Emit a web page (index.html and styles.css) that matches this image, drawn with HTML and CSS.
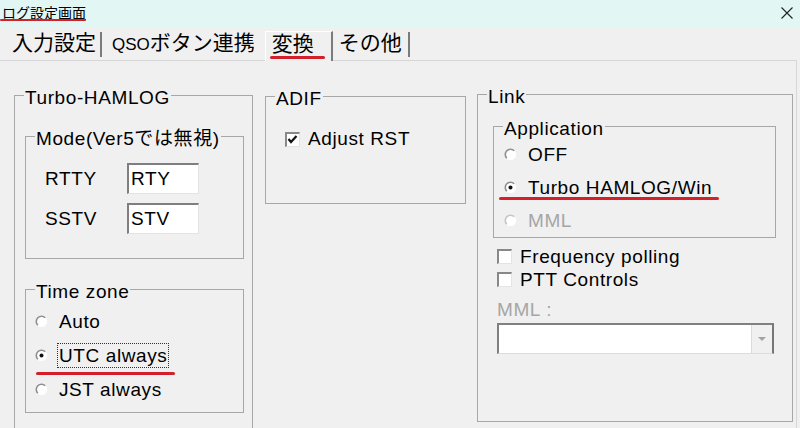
FILE: index.html
```html
<!DOCTYPE html>
<html lang="ja">
    <head>
        <meta charset="utf-8">
        <link rel="stylesheet" href="styles.css">
    </head>
    <body>
    <div class="titlebar">
        <span class="title">ログ設定画面</span>
        <svg class="close" width="12" height="12" viewBox="0 0 12 12"><path d="M0.5 0.5L11.5 11.5M11.5 0.5L0.5 11.5" stroke="#222" stroke-width="1.1" fill="none"/></svg>
    </div>
    <div class="tabs">
        <div class="tab tab-first">入力設定</div>
        <div class="tab tab-qso"><span class="latin">QSO</span>ボタン連携</div>
        <div class="tab tab-active"><span class="tab-mark">変換</span></div>
        <div class="tab tab-last">その他</div>
    </div>
    <div class="page">
        <!-- Turbo-HAMLOG -->
        <fieldset class="group group-turbo">
            <legend>Turbo-HAMLOG</legend>
            <fieldset class="group group-mode">
                <legend>Mode(Ver5では無視)</legend>
                <div class="mode-body">
                    <div class="field-row"><span class="field-label">RTTY</span><input class="text-box" type="text" value="RTY"></div>
                    <div class="field-row"><span class="field-label">SSTV</span><input class="text-box" type="text" value="STV"></div>
                </div>
            </fieldset>
            <fieldset class="group group-tz">
                <legend>Time zone</legend>
                <div class="tz-body">
                    <div class="option">
                        <svg class="radio" width="13" height="13" viewBox="0 0 13 13"><circle cx="6.5" cy="6.5" r="5.6" fill="#fff"/><path d="M2.8 10.2A5.2 5.2 0 0 1 10.2 2.8" stroke="#8e8e8e" stroke-width="1.6" fill="none"/></svg>
                        <span class="option-text">Auto</span>
                    </div>
                    <div class="option mark-utc">
                        <svg class="radio" width="13" height="13" viewBox="0 0 13 13"><circle cx="6.5" cy="6.5" r="5.6" fill="#fff"/><path d="M2.8 10.2A5.2 5.2 0 0 1 10.2 2.8" stroke="#8e8e8e" stroke-width="1.6" fill="none"/><circle cx="6.5" cy="6.5" r="2" fill="#111"/></svg>
                        <span class="option-text focus">UTC always</span>
                    </div>
                    <div class="option">
                        <svg class="radio" width="13" height="13" viewBox="0 0 13 13"><circle cx="6.5" cy="6.5" r="5.6" fill="#fff"/><path d="M2.8 10.2A5.2 5.2 0 0 1 10.2 2.8" stroke="#8e8e8e" stroke-width="1.6" fill="none"/></svg>
                        <span class="option-text">JST always</span>
                    </div>
                </div>
            </fieldset>
        </fieldset>

        <!-- ADIF -->
        <fieldset class="group group-adif">
            <legend>ADIF</legend>
            <div class="adif-body">
                <div class="check">
                    <span class="box"><svg width="11" height="11" viewBox="0 0 11 11"><path d="M1.5 5L4 8L9.5 2" stroke="#111" stroke-width="2.2" fill="none"/></svg></span>
                    <span>Adjust RST</span>
                </div>
            </div>
        </fieldset>

        <!-- Link -->
        <fieldset class="group group-link">
            <legend>Link</legend>
            <fieldset class="group group-app">
                <legend>Application</legend>
                <div class="app-body">
                    <div class="option option-app">
                        <svg class="radio" width="13" height="13" viewBox="0 0 13 13"><circle cx="6.5" cy="6.5" r="5.6" fill="#fff"/><path d="M2.8 10.2A5.2 5.2 0 0 1 10.2 2.8" stroke="#8e8e8e" stroke-width="1.6" fill="none"/></svg>
                        <span class="option-text">OFF</span>
                    </div>
                    <div class="option option-app mark-turbo">
                        <svg class="radio" width="13" height="13" viewBox="0 0 13 13"><circle cx="6.5" cy="6.5" r="5.6" fill="#fff"/><path d="M2.8 10.2A5.2 5.2 0 0 1 10.2 2.8" stroke="#8e8e8e" stroke-width="1.6" fill="none"/><circle cx="6.5" cy="6.5" r="2" fill="#111"/></svg>
                        <span class="option-text">Turbo HAMLOG/Win</span>
                    </div>
                    <div class="option option-app disabled">
                        <svg class="radio" width="13" height="13" viewBox="0 0 13 13"><circle cx="6.5" cy="6.5" r="5.6" fill="#fff"/><path d="M2.8 10.2A5.2 5.2 0 0 1 10.2 2.8" stroke="#c4c4c4" stroke-width="1.6" fill="none"/></svg>
                        <span class="option-text">MML</span>
                    </div>
                </div>
            </fieldset>
            <div class="link-checks">
                <div class="check check-link"><span class="box"></span><span>Frequency polling</span></div>
                <div class="check check-link"><span class="box"></span><span>PTT Controls</span></div>
            </div>
            <div class="mml-label">MML :</div>
            <div class="combo"><span class="combo-button"><span class="arrow"></span></span></div>
        </fieldset>
    </div>
    </body>
</html>
```

FILE: styles.css
```css
*{
    box-sizing: border-box;
}
body{
    margin:0;
    width:800px;
    height:428px;
    overflow:hidden;
    background:#f0f0f0;
    color:#000;
    font-family:"Liberation Sans","Noto Sans CJK JP",sans-serif;
    font-size:19px;
    letter-spacing:0.6px;
}

/* title bar */
.titlebar{
    height:28px;
    background:#e2f6f4;
    display:flex;
    justify-content:space-between;
    align-items:flex-start;
    padding:5px 7px 0 2px;
}
.title{
    position:relative;
    font-size:14px;
    line-height:16px;
    letter-spacing:0;
    text-decoration:underline;
}
.title::after{
    content:"";
    position:absolute;
    left:-2px;
    right:0;
    top:14px;
    height:2px;
    background:#d3202b;
    border-radius:1px;
}
.close{
    margin-top:2px;
}

/* tabs */
.tabs{
    height:32px;
    display:flex;
    align-items:flex-end;
    padding-left:3px;
}
.tab{
    height:25px;
    margin-bottom:3px;
    font-size:21px;
    line-height:22px;
    letter-spacing:0;
    white-space:nowrap;
}
.tab .latin{
    font-size:17px;
}
.tab-first{
    padding:0 4px 0 9px;
    border-right:2px solid #7b7b7b;
}
.tab-qso{
    padding:0 10px 0 10px;
}
.tab-active{
    position:relative;
    z-index:1;
    height:30px;
    margin-bottom:-1px;
    padding:1px 17px 0 6px;
    background:#f0f0f0;
    border-top:1px solid #fff;
    border-left:1px solid #fff;
    border-right:2px solid #7b7b7b;
}
.tab-mark{
    position:relative;
}
.tab-mark::after{
    content:"";
    position:absolute;
    left:-2px;
    right:-11px;
    top:24px;
    height:3px;
    background:#d3202b;
    border-radius:2px;
}
.tab-last{
    padding:0 6px;
    border-right:2px solid #7b7b7b;
}

/* page */
.page{
    width:797px;
    height:368px;
    border-top:1px solid #d7d7d7;
    border-right:1px solid #d7d7d7;
    padding:22px 0 0 14px;
    display:flex;
    align-items:flex-start;
    overflow:hidden;
}
.group{
    margin:0;
    padding:0;
    min-width:0;
    border:1px solid #a7a7a7;
}
.group > legend{
    margin-left:9px;
    padding:5px 1px 0;
    line-height:19px;
}
.group-turbo{
    width:239px;
    height:360px;
    flex:none;
}
.group-mode{
    width:219px;
    height:135px;
    margin:17px 0 0 10px;
}
.mode-body{
    padding:15px 0 0 19px;
}
.field-row{
    display:flex;
    align-items:center;
    height:31px;
}
.field-row + .field-row{
    margin-top:9px;
}
.field-label{
    width:82px;
}
.text-box{
    width:72px;
    height:31px;
    margin:0;
    padding:0 0 0 2px;
    border-style:solid;
    border-width:2px 1px 1px 2px;
    border-color:#7f7f7f #e3e3e3 #e3e3e3 #7f7f7f;
    background:#fff;
    font:inherit;
    letter-spacing:0.6px;
    color:#000;
    outline:none;
}
.group-tz{
    width:219px;
    height:136px;
    margin:18px 0 0 10px;
}
.tz-body{
    padding:3px 0 0 9px;
}
.option{
    position:relative;
    display:flex;
    align-items:center;
    width:fit-content;
    height:34px;
}
.radio{
    flex:none;
    margin-right:9px;
}
.option-text{
    padding:0 1px;
    line-height:23px;
    border:1px dotted transparent;
    white-space:nowrap;
}
.option-text.focus{
    border-color:#333;
}
.mark-utc::after,
.mark-turbo::after{
    content:"";
    position:absolute;
    height:3px;
    background:#d3202b;
    border-radius:2px;
}
.mark-utc::after{
    left:1px;
    right:-6px;
    top:34px;
}
.mark-turbo::after{
    left:-5px;
    right:-5px;
    top:26px;
}
.disabled{
    color:#a6a6a6;
}

/* ADIF */
.group-adif{
    width:201px;
    height:120px;
    margin:1px 0 0 12px;
    flex:none;
}
.adif-body{
    padding:19px 0 0 19px;
}
.check{
    display:flex;
    align-items:center;
    height:24px;
    white-space:nowrap;
}
.box{
    flex:none;
    width:15px;
    height:15px;
    margin-right:8px;
    background:#fff;
    border-style:solid;
    border-width:2px 1px 1px 2px;
    border-color:#888 #e4e4e4 #e4e4e4 #888;
}
.box svg{
    display:block;
}

/* Link */
.group-link{
    width:316px;
    height:340px;
    margin:-1px 0 0 11px;
    flex:none;
}
.group-app{
    width:283px;
    height:124px;
    margin:8px 0 0 15px;
}
.app-body{
    padding-left:10px;
}
.option-app{
    height:33px;
}
.link-checks{
    margin-top:7px;
    padding-left:19px;
}
.check-link{
    height:23px;
}
.mml-label{
    margin-top:8px;
    padding-left:19px;
    line-height:22px;
    color:#a6a6a6;
}
.combo{
    width:277px;
    height:31px;
    margin:2px 0 0 19px;
    display:flex;
    justify-content:flex-end;
    background:#fff;
    border-style:solid;
    border-width:2px 2px 1px 2px;
    border-color:#808080 #777 #dcdcdc #808080;
}
.combo-button{
    width:21px;
    display:flex;
    align-items:center;
    justify-content:center;
    background:#f0f0f0;
    border-left:1px solid #dadada;
}
.arrow{
    width:0;
    height:0;
    border-left:4px solid transparent;
    border-right:4px solid transparent;
    border-top:4px solid #a3a3a3;
}
```
